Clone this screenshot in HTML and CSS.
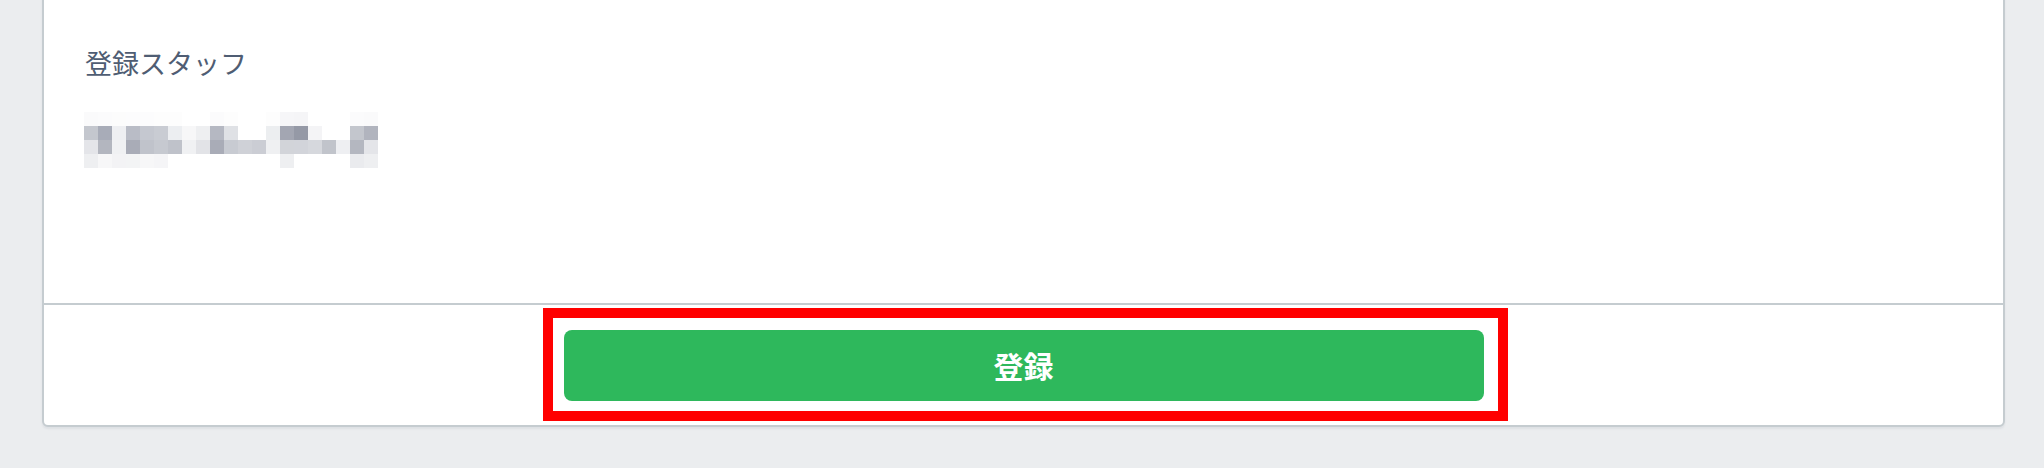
FILE: index.html
```html
<!DOCTYPE html>
<html lang="ja">
<head>
<meta charset="utf-8">
<title>登録スタッフ</title>
<link rel="stylesheet" href="styles.css">
</head>
<body>
<div class="card">
  <div class="card-body">
    <div class="label">登録スタッフ</div>
    <div class="mosaic" aria-label="登録スタッフ名（ぼかし）">
      <span style="background:#fafafb"></span><span style="background:#fbfbfc"></span><span style="background:#fcfcfc"></span><span style="background:#fcfcfd"></span><span style="background:#fcfcfd"></span><span style="background:#fdfdfd"></span><span style="background:#fdfdfd"></span><span style="background:#fff"></span><span style="background:#fff"></span><span style="background:#fbfbfc"></span><span style="background:#fdfdfd"></span><span style="background:#fff"></span><span style="background:#fff"></span><span style="background:#fdfdfd"></span><span style="background:#f6f6f8"></span><span style="background:#f5f5f7"></span><span style="background:#fff"></span><span style="background:#fff"></span><span style="background:#fff"></span><span style="background:#fbfbfc"></span><span style="background:#fafafb"></span>
      <span style="background:#c4c7ce"></span><span style="background:#a8acb8"></span><span style="background:#eeeff2"></span><span style="background:#b9bcc6"></span><span style="background:#c5c8d0"></span><span style="background:#c9ccd3"></span><span style="background:#eceef1"></span><span style="background:#f7f7f8"></span><span style="background:#eeeff1"></span><span style="background:#b5b8c2"></span><span style="background:#dfe1e5"></span><span style="background:#fff"></span><span style="background:#fff"></span><span style="background:#eceef0"></span><span style="background:#a3a6b2"></span><span style="background:#9599a6"></span><span style="background:#f4f4f6"></span><span style="background:#fff"></span><span style="background:#fff"></span><span style="background:#c3c6cd"></span><span style="background:#b1b4be"></span>
      <span style="background:#e4e5e9"></span><span style="background:#b3b6bf"></span><span style="background:#f0f1f3"></span><span style="background:#a9acb7"></span><span style="background:#c0c3cb"></span><span style="background:#c6c9d0"></span><span style="background:#bfc2ca"></span><span style="background:#f0f1f3"></span><span style="background:#e2e3e7"></span><span style="background:#a9acb7"></span><span style="background:#c8cbd2"></span><span style="background:#cfd1d7"></span><span style="background:#cbcdd4"></span><span style="background:#eff0f2"></span><span style="background:#d2d4d9"></span><span style="background:#d2d4da"></span><span style="background:#d6d8dd"></span><span style="background:#c1c4cb"></span><span style="background:#eeeff2"></span><span style="background:#b4b7c0"></span><span style="background:#e4e5e9"></span>
      <span style="background:#eeeff1"></span><span style="background:#f7f7f8"></span><span style="background:#f3f3f5"></span><span style="background:#f3f4f5"></span><span style="background:#f7f7f8"></span><span style="background:#f5f5f7"></span><span style="background:#fff"></span><span style="background:#fff"></span><span style="background:#fff"></span><span style="background:#fff"></span><span style="background:#fff"></span><span style="background:#fff"></span><span style="background:#fff"></span><span style="background:#fff"></span><span style="background:#eeeff1"></span><span style="background:#fff"></span><span style="background:#fff"></span><span style="background:#fff"></span><span style="background:#fff"></span><span style="background:#eaebee"></span><span style="background:#eeeff1"></span>
    </div>
  </div>
  <div class="card-footer">
    <div class="highlight">
      <button class="btn-submit" type="submit">登録</button>
    </div>
  </div>
</div>
</body>
</html>
```

FILE: styles.css
```css
html, body {
  margin: 0;
  padding: 0;
}

body {
  background: #ebedef;
  font-family: "Noto Sans CJK JP", "Noto Sans", sans-serif;
  color: #4f5d73;
  width: 2044px;
  height: 468px;
  overflow: hidden;
}

.card {
  box-sizing: border-box;
  margin: -24px 0 0 42px;
  width: 1963px;
  background: #fff;
  border: 2px solid #c5ccd0;
  border-radius: 6px;
  box-shadow: 0 2px 2px rgba(60, 75, 100, 0.08);
}

.card-body {
  padding: 65px 40px 135px 43px;
}

.label {
  font-size: 27px;
  line-height: 39px;
  color: #4f5d73;
  margin-bottom: 30px;
  margin-left: -2px;
}

.mosaic {
  display: grid;
  grid-template-columns: repeat(21, 14px);
  grid-template-rows: repeat(4, 14px);
  margin-left: -3px;
}

.mosaic span {
  display: block;
}

.card-footer {
  border-top: 2px solid #c5ccd0;
  padding: 25px 0 24px;
  display: flex;
  justify-content: center;
}

.highlight {
  position: relative;
  width: 920px;
}

.highlight::after {
  content: "";
  position: absolute;
  top: -22px;
  left: -21px;
  right: -24px;
  bottom: -20px;
  border: 10px solid #ff0000;
  pointer-events: none;
}

.btn-submit {
  display: block;
  width: 100%;
  height: 71px;
  border: 0;
  border-radius: 8px;
  background: #2eb85c;
  color: #fff;
  font-family: "Noto Sans CJK JP", "Noto Sans", sans-serif;
  font-size: 30px;
  font-weight: 700;
  line-height: 71px;
  padding: 0;
  cursor: pointer;
}
```
